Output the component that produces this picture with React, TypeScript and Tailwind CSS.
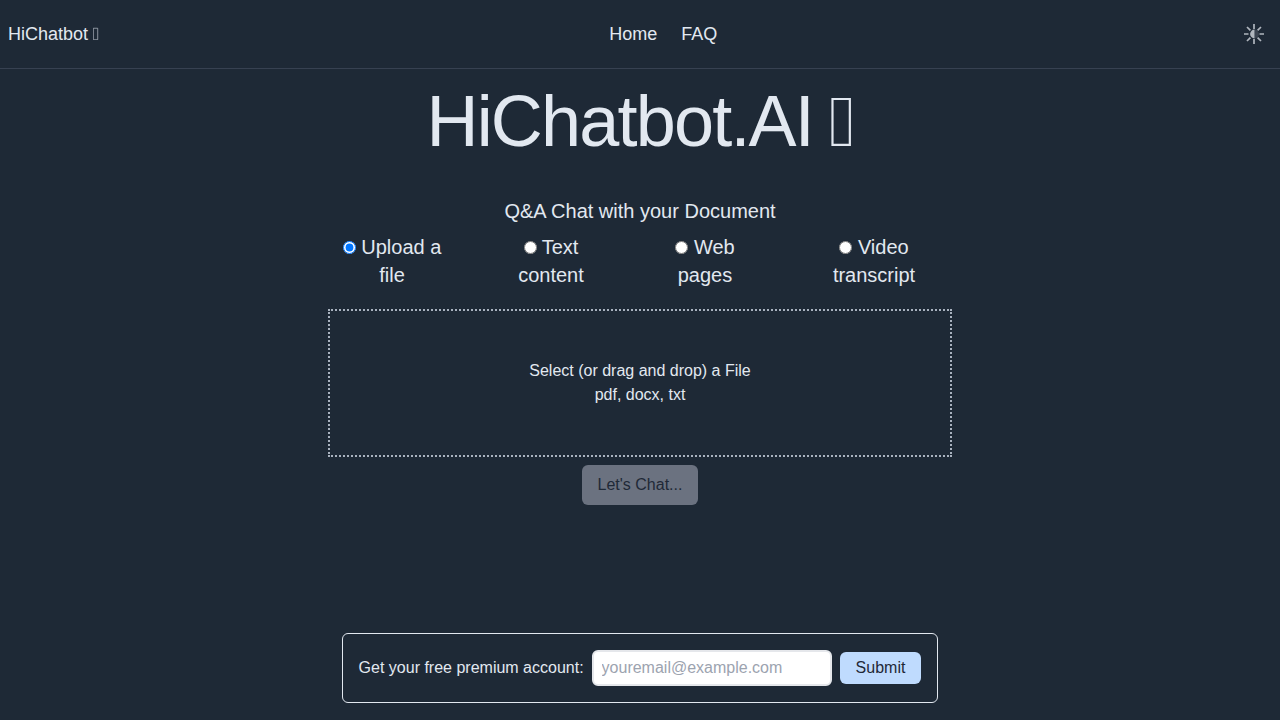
import { useState } from "react";

const sources = [
  { id: "file", label: "Upload a file" },
  { id: "text", label: "Text content" },
  { id: "web", label: "Web pages" },
  { id: "video", label: "Video transcript" },
];

function BoxGlyph() {
  return (
    <svg viewBox="0 0 22 52" className="inline-block h-[0.72em] w-[0.31em] align-baseline" fill="none" aria-hidden="true">
      <path d="M1.3 5h17.4v46H1.3z" stroke="currentColor" strokeWidth="2.2" />
    </svg>
  );
}

function ThemeIcon() {
  return (
    <svg viewBox="0 0 20 20" className="size-5" fill="none" aria-hidden="true">
      <path
        d="M10 0v5M10 15v5M0 10h4.5M15.5 10H20M3 3l3.4 3.4M13.6 13.6L17 17M3 17l3.4-3.4M13.6 6.4L17 3"
        stroke="currentColor"
        strokeWidth="1.7"
      />
      <path d="M10.5 5.6a4.4 4.4 0 1 0 0 8.8z" fill="currentColor" />
      <path d="M10.5 5.6a4.4 4.4 0 0 1 0 8.8z" fill="currentColor" opacity="0.2" />
    </svg>
  );
}

function NavBar() {
  return (
    <nav className="flex h-[69px] items-center justify-between border-b border-[#374151] px-2 text-lg">
      <a href="#home">
        HiChatbot <BoxGlyph />
      </a>
      <div className="flex gap-6">
        <a href="#home">Home</a>
        <a href="#faq">FAQ</a>
      </div>
      <button type="button" aria-label="Toggle theme" className="py-2 pr-2 pl-4 text-[#b0b6be]">
        <ThemeIcon />
      </button>
    </nav>
  );
}

export default function App() {
  const [source, setSource] = useState("file");
  const [email, setEmail] = useState("");

  return (
    <div className="flex min-h-screen flex-col bg-[#1e2936] font-['Liberation_Sans',Arial,sans-serif] text-[#e2e8f0]">
      <NavBar />
      <main className="flex grow flex-col items-center px-4 pt-4 text-center">
        <h1 className="text-7xl leading-none tracking-tight">
          HiChatbot.AI <BoxGlyph />
        </h1>
        <section className="mt-10 flex w-full max-w-[624px] flex-col items-center">
          <h2 className="text-xl">Q&amp;A Chat with your Document</h2>
          <div
            role="radiogroup"
            aria-label="Document source"
            className="mt-2 grid w-full grid-cols-[128fr_126fr_118fr_156fr] gap-8 text-xl"
          >
            {sources.map((s) => (
              <label key={s.id} className="px-3">
                <input
                  type="radio"
                  name="source"
                  checked={source === s.id}
                  onChange={() => setSource(s.id)}
                />{" "}
                {s.label}
              </label>
            ))}
          </div>
          <button
            type="button"
            className="mt-5 w-full border-2 border-dotted border-[#a9b2bf] py-12 text-base"
          >
            <span className="block">Select (or drag and drop) a File</span>
            <span className="block">pdf, docx, txt</span>
          </button>
          <button
            type="button"
            disabled
            className="mt-2 rounded-md bg-[#6b7280] px-4 py-2 text-base text-[#1f2937]"
          >
            Let's Chat...
          </button>
        </section>
      </main>
      <footer className="flex justify-center px-4 pb-[17px]">
        <form
          onSubmit={(e) => e.preventDefault()}
          className="flex items-center gap-2 rounded-md border border-[#e2e8f0] p-4"
        >
          <label htmlFor="email">Get your free premium account:</label>
          <input
            id="email"
            type="email"
            value={email}
            onChange={(e) => setEmail(e.target.value)}
            placeholder="youremail@example.com"
            className="h-9 w-60 rounded-md border-2 border-[#e5e7eb] bg-white px-2 text-[#1f2937] placeholder:text-[#9ca3af]"
          />
          <button type="submit" className="rounded-md bg-[#bfdbfe] px-4 py-1 text-[#1f2937]">
            Submit
          </button>
        </form>
      </footer>
    </div>
  );
}
